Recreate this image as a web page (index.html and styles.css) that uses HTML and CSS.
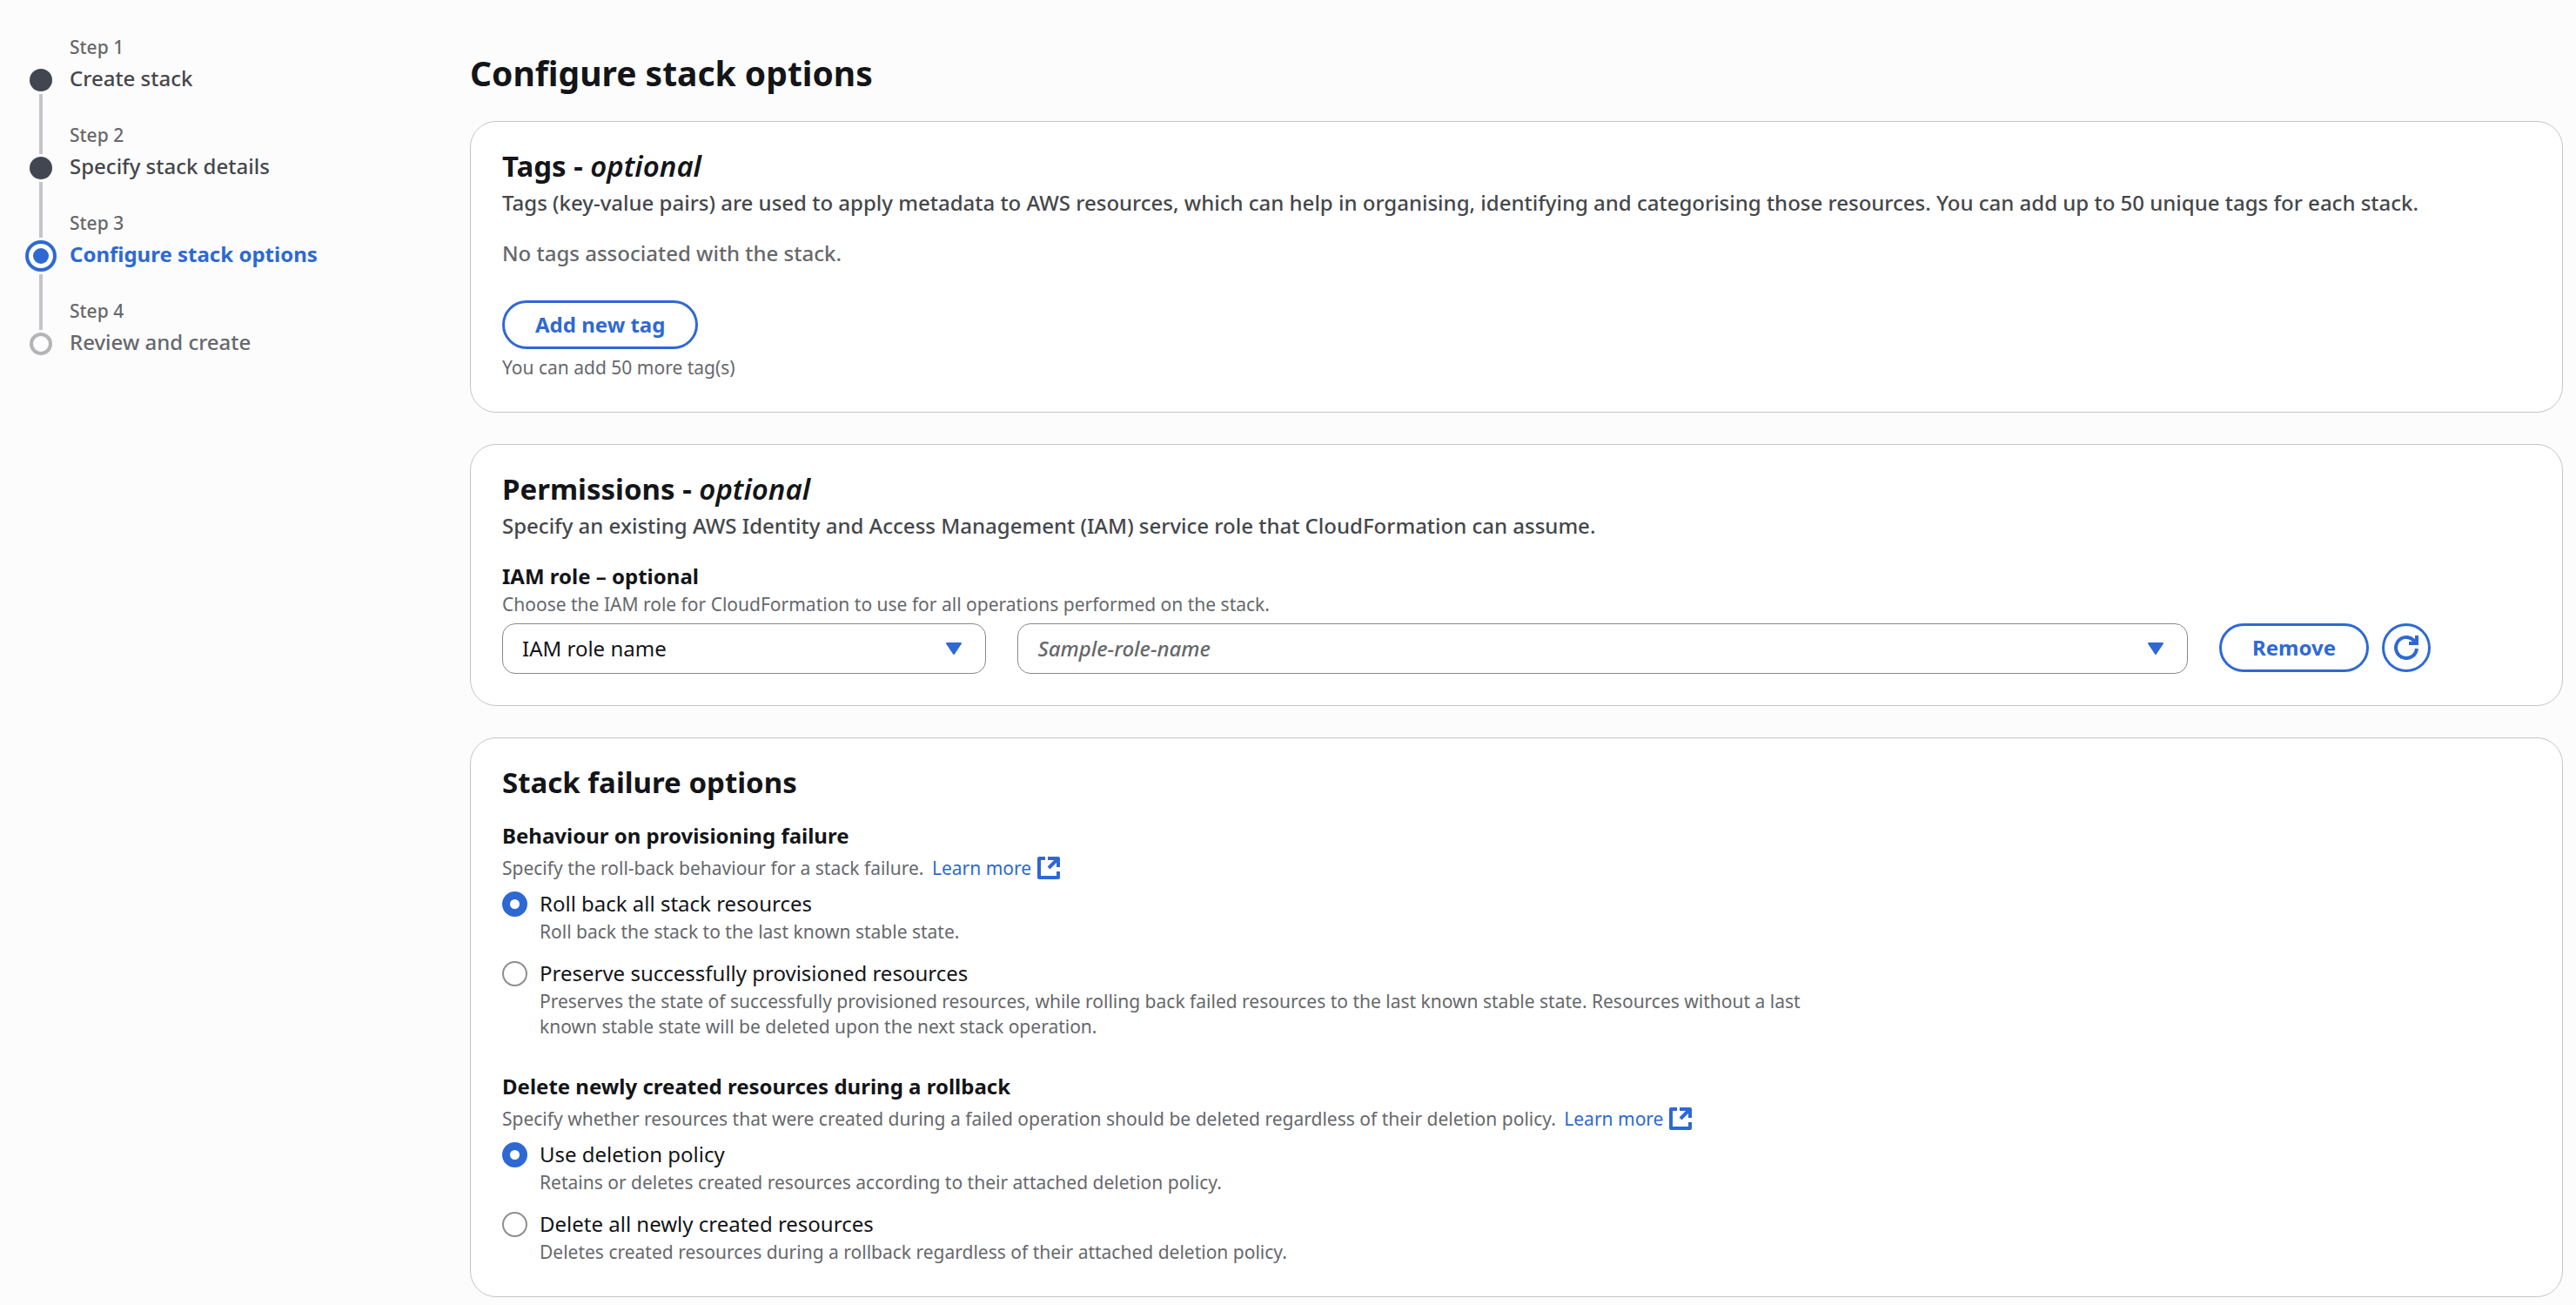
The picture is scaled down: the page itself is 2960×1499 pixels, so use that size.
FILE: index.html
```html
<!DOCTYPE html>
<html lang="en-GB">
<head>
<meta charset="utf-8">
<meta name="viewport" content="width=device-width, initial-scale=1">
<title>Configure stack options</title>
<link rel="stylesheet" href="styles.css">
</head>
<body>
<svg class="defs" aria-hidden="true">
  <symbol id="external" viewBox="0 0 26 26">
    <path d="M9 2H2v22h22v-7M12 2h12v10M24 2 13 13" fill="none" stroke="currentColor" stroke-width="4" stroke-linejoin="round"/>
  </symbol>
  <symbol id="caret" viewBox="0 0 20 16">
    <path d="M2 2h16l-8 12z" fill="currentColor" stroke="currentColor" stroke-width="2" stroke-linejoin="round"/>
  </symbol>
</svg>
<div class="layout">
  <nav class="steps" aria-label="Steps">
    <ol class="step-list">
      <li class="step step-done">
        <div class="rail"><span class="line line-top"></span><span class="dot"></span><span class="line line-bottom"></span></div>
        <div class="step-text"><span class="step-number">Step 1</span><a class="step-title" href="#create">Create stack</a></div>
      </li>
      <li class="step step-done">
        <div class="rail"><span class="line line-top"></span><span class="dot"></span><span class="line line-bottom"></span></div>
        <div class="step-text"><span class="step-number">Step 2</span><a class="step-title" href="#details">Specify stack details</a></div>
      </li>
      <li class="step step-current" aria-current="step">
        <div class="rail"><span class="line line-top"></span><span class="dot"></span><span class="line line-bottom"></span></div>
        <div class="step-text"><span class="step-number">Step 3</span><span class="step-title">Configure stack options</span></div>
      </li>
      <li class="step step-next">
        <div class="rail"><span class="line line-top"></span><span class="dot"></span></div>
        <div class="step-text"><span class="step-number">Step 4</span><span class="step-title">Review and create</span></div>
      </li>
    </ol>
  </nav>

  <main class="content">
    <h1>Configure stack options</h1>

    <section class="card">
      <h2>Tags - <em>optional</em></h2>
      <p class="card-description">Tags (key-value pairs) are used to apply metadata to AWS resources, which can help in organising, identifying and categorising those resources. You can add up to 50 unique tags for each stack.</p>
      <p class="empty">No tags associated with the stack.</p>
      <button class="button" type="button">Add new tag</button>
      <p class="hint tag-limit">You can add 50 more tag(s)</p>
    </section>

    <section class="card">
      <h2>Permissions - <em>optional</em></h2>
      <p class="card-description">Specify an existing AWS Identity and Access Management (IAM) service role that CloudFormation can assume.</p>
      <div class="field">
        <label class="field-label" for="role-kind">IAM role – optional</label>
        <p class="hint" id="role-hint">Choose the IAM role for CloudFormation to use for all operations performed on the stack.</p>
        <div class="role-row">
          <div class="select">
            <select id="role-kind" aria-describedby="role-hint"><option>IAM role name</option><option>IAM role ARN</option></select>
            <svg class="caret" aria-hidden="true"><use href="#caret"/></svg>
          </div>
          <div class="select">
            <select class="placeholder" aria-label="Role name"><option>Sample-role-name</option></select>
            <svg class="caret" aria-hidden="true"><use href="#caret"/></svg>
          </div>
          <div class="role-actions">
            <button class="button" type="button">Remove</button>
            <button class="button button-icon" type="button" aria-label="Refresh">
              <svg class="refresh" viewBox="0 0 28 28" aria-hidden="true"><path d="M26 15A12 12 0 1 1 22 5L25 9M26 0V9H17" fill="none" stroke="currentColor" stroke-width="4"/></svg>
            </button>
          </div>
        </div>
      </div>
    </section>

    <section class="card">
      <h2>Stack failure options</h2>
      <fieldset class="field">
        <legend class="field-label">Behaviour on provisioning failure</legend>
        <p class="hint hint-link">Specify the roll-back behaviour for a stack failure. <a href="#learn-rollback">Learn more<svg class="external" aria-hidden="true"><use href="#external"/></svg></a></p>
        <div class="radios">
          <div class="radio">
            <input type="radio" name="failure" id="rollback" checked>
            <label for="rollback">Roll back all stack resources</label>
            <p class="hint">Roll back the stack to the last known stable state.</p>
          </div>
          <div class="radio">
            <input type="radio" name="failure" id="preserve">
            <label for="preserve">Preserve successfully provisioned resources</label>
            <p class="hint">Preserves the state of successfully provisioned resources, while rolling back failed resources to the last known stable state. Resources without a last known stable state will be deleted upon the next stack operation.</p>
          </div>
        </div>
      </fieldset>
      <fieldset class="field field-next">
        <legend class="field-label">Delete newly created resources during a rollback</legend>
        <p class="hint hint-link">Specify whether resources that were created during a failed operation should be deleted regardless of their deletion policy. <a href="#learn-deletion">Learn more<svg class="external" aria-hidden="true"><use href="#external"/></svg></a></p>
        <div class="radios">
          <div class="radio">
            <input type="radio" name="deletion" id="policy" checked>
            <label for="policy">Use deletion policy</label>
            <p class="hint">Retains or deletes created resources according to their attached deletion policy.</p>
          </div>
          <div class="radio">
            <input type="radio" name="deletion" id="delete-all">
            <label for="delete-all">Delete all newly created resources</label>
            <p class="hint">Deletes created resources during a rollback regardless of their attached deletion policy.</p>
          </div>
        </div>
      </fieldset>
    </section>
  </main>
</div>
</body>
</html>
```
FILE: styles.css
```css
:root {
  --blue: #2e69d3;
  --ink: #131518;
  --dark: #424650;
  --body: #45474b;
  --muted: #66686c;
  --rule: #c4c5c8;
}

* { box-sizing: border-box; }

body {
  margin: 0;
  background: #fcfcfd;
  color: var(--ink);
  font: 500 24px/36px "Noto Sans", "Open Sans", sans-serif;
}

h1, h2, p, ol, fieldset, legend { margin: 0; padding: 0; }
fieldset { border: 0; min-width: 0; }
a { color: var(--blue); text-decoration: none; }
.defs { display: none; }

.layout {
  display: grid;
  grid-template-columns: 540px 1fr;
  padding-right: 15px;
}

/* Step navigation */
.steps { padding: 38px 29px; }
.step-list { list-style: none; }
.step { display: flex; gap: 15px; }
.step-text { display: flex; flex-direction: column; padding-bottom: 29px; }
.step-number { font-size: 21px; line-height: 32px; color: var(--muted); }
.step-title { line-height: 40px; color: var(--body); }
.step-next .step-title { color: var(--muted); }
.step-current .step-title { color: var(--blue); font-weight: 700; }

.rail {
  width: 36px;
  display: flex;
  flex-direction: column;
  align-items: center;
  gap: 3px;
}
.line { width: 4px; background: var(--rule); }
.line-top { height: 38px; }
.line-bottom { flex: 1; }
.step:first-child .line-top { background: none; }
.dot { width: 26px; height: 26px; border-radius: 50%; }
.step-done .dot { background: var(--dark); }
.step-next .dot { border: 4px solid #b3b4b7; }
.step-current .line-top { height: 33px; }
.step-current .dot {
  width: 36px;
  height: 36px;
  border: 4px solid var(--blue);
  padding: 5px;
  background: var(--blue) content-box;
}

/* Page content */
.content {
  display: flex;
  flex-direction: column;
  gap: 36px;
  padding: 59px 0 10px;
}
h1 { font-size: 39px; line-height: 50px; font-weight: 700; margin-bottom: -6px; }
h2 { font-size: 33px; line-height: 42px; font-weight: 700; }
h2 em { font-weight: 600; }

.card {
  padding: 30px 36px 36px;
  border: 1px solid var(--rule);
  border-radius: 30px;
  background: #fff;
}
.card-description { margin-top: 3px; color: var(--body); }
.empty { margin: 22px 0 36px; color: var(--muted); }
.hint { font-size: 21px; line-height: 29px; font-weight: 400; color: var(--muted); }
.tag-limit { margin-top: 7px; }

.button {
  height: 56px;
  padding: 0 35px;
  border: 3px solid var(--blue);
  border-radius: 28px;
  background: #fff;
  color: var(--blue);
  font: inherit;
  font-weight: 700;
  display: inline-flex;
  align-items: center;
  justify-content: center;
}
.card > .button { display: flex; }
.button-icon { width: 56px; padding: 0; }
.refresh { width: 28px; height: 28px; }

/* Form fields */
.field { margin-top: 24px; }
.field-next { margin-top: 38px; }
.field-label { display: block; line-height: 32px; font-weight: 700; }
.field-label + .hint { margin-top: 2px; }
.field-label + .hint-link { margin-top: 3px; line-height: 36px; }
.hint-link a { margin-left: 4px; }
.external { width: 26px; height: 26px; margin-left: 7px; vertical-align: -5px; }

.role-row {
  display: grid;
  grid-template-columns: 24fr 58fr auto;
  gap: 36px;
  margin-top: 7px;
  padding-right: 115px;
}
.role-actions { display: flex; gap: 15px; }
.select { position: relative; }
.select select {
  display: block;
  width: 100%;
  height: 58px;
  padding: 0 64px 0 22px;
  border: 1px solid #86888d;
  border-radius: 15px;
  background: #fff;
  color: var(--ink);
  font: inherit;
  font-weight: 400;
  appearance: none;
}
.select .placeholder { font-style: italic; font-weight: 500; color: var(--muted); }
.caret {
  position: absolute;
  right: 27px;
  top: 21px;
  width: 20px;
  height: 16px;
  color: var(--blue);
  pointer-events: none;
}

.radios { display: grid; gap: 17px; margin-top: 7px; }
.radio {
  display: grid;
  grid-template-columns: 29px auto;
  column-gap: 14px;
  row-gap: 2px;
  justify-content: start;
  max-width: 1508px;
}
.radio label { line-height: 32px; font-weight: 400; }
.radio .hint { grid-column: 2; }
.radio input {
  appearance: none;
  width: 29px;
  height: 29px;
  margin: 0;
  align-self: center;
  border: 2px solid #8c8e92;
  border-radius: 50%;
  background: #fff;
}
.radio input:checked { border: 9px solid var(--blue); }
```
